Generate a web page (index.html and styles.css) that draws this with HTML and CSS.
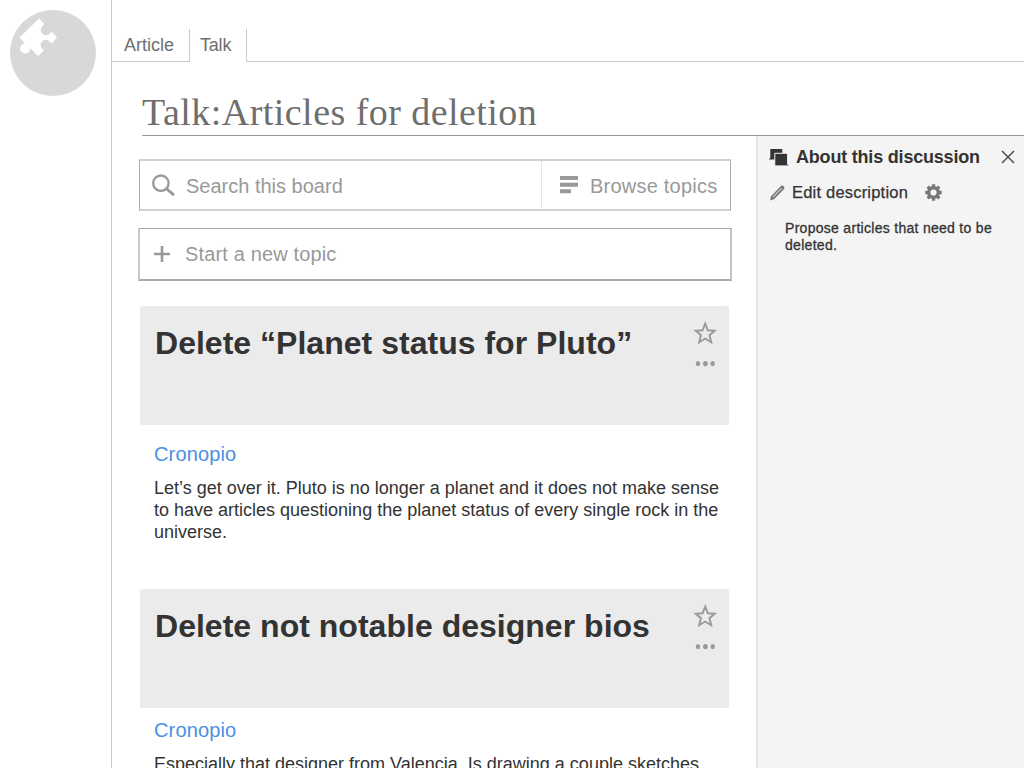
FILE: index.html
```html
<!DOCTYPE html>
<html lang="en">
<head>
<meta charset="utf-8">
<title>Talk:Articles for deletion</title>
<link rel="stylesheet" href="styles.css">
</head>
<body>
<div class="app">
  <div class="rail">
    <svg class="logo" width="86" height="86" viewBox="10 10 86 86">
      <circle cx="53" cy="53" r="43" fill="#d8d8d8"/>
      <path fill="#fff" d="M38.9 18.5L44.3 24L42.2 26.4A5.2 5.2 0 0 0 49.9 33.6L51.7 31.8L57.1 37.4L51.5 43.4L49.6 41.5A5.1 5.1 0 0 0 42 48.6L43.8 50.5L38.2 56.1L30.3 48.3A5.1 5.1 0 1 1 24.8 43.3L19.5 37.6Z"/>
    </svg>
  </div>
  <div class="page">
    <nav class="tabs">
      <a class="tab tab-article">Article</a>
      <a class="tab tab-talk">Talk</a>
      <span class="tab-fill"></span>
    </nav>
    <h1 class="title">Talk:Articles for deletion</h1>
    <div class="columns">
      <main class="board">
        <div class="search">
          <div class="search-field">
            <svg class="search-icon" width="24" height="24" viewBox="0 0 24 24" fill="none" stroke="#999"><circle cx="8.9" cy="9.2" r="7.7" stroke-width="2.3"/><path d="M14.2 14.5L22 21.2" stroke-width="2.9"/></svg>
            <span>Search this board</span>
          </div>
          <div class="browse">
            <svg class="list-icon" width="18" height="18" viewBox="0 0 18 18" fill="#999"><path d="M0 .1h18v4H0zM0 6.8h18v4H0zM0 13.3h11v4H0z"/></svg>
            <span>Browse topics</span>
          </div>
        </div>
        <div class="new-topic">
          <svg class="plus-icon" width="16" height="16" viewBox="0 0 16 16" stroke="#999" stroke-width="2.6"><path d="M8 0v16M0 8h16"/></svg>
          <span>Start a new topic</span>
        </div>
        <article class="topic">
          <header class="topic-head">
            <h2>Delete “Planet status for Pluto”</h2>
            <div class="actions">
              <svg width="24" height="23" viewBox="0 0 24 23" fill="none" stroke="#999" stroke-width="1.9"><path d="M12.2 2.6L14.8 9.3L21.6 9.8L16.5 14.2L18.2 21.2L12.2 17.5L6.2 21.2L7.9 14.2L2.8 9.8L9.6 9.3Z"/></svg>
              <svg width="20" height="6" viewBox="0 0 20 6" fill="#999"><ellipse cx="3" cy="2.6" rx="2.2" ry="2.6"/><ellipse cx="10.4" cy="2.6" rx="2.4" ry="2.6"/><ellipse cx="17.7" cy="2.6" rx="2.2" ry="2.6"/></svg>
            </div>
          </header>
          <div class="post">
            <a class="author">Cronopio</a>
            <p>Let’s get over it. Pluto is no longer a planet and it does not make sense<br>to have articles questioning the planet status of every single rock in the<br>universe.</p>
          </div>
        </article>
        <article class="topic second">
          <header class="topic-head">
            <h2>Delete not notable designer bios</h2>
            <div class="actions">
              <svg width="24" height="23" viewBox="0 0 24 23" fill="none" stroke="#999" stroke-width="1.9"><path d="M12.2 2.6L14.8 9.3L21.6 9.8L16.5 14.2L18.2 21.2L12.2 17.5L6.2 21.2L7.9 14.2L2.8 9.8L9.6 9.3Z"/></svg>
              <svg width="20" height="6" viewBox="0 0 20 6" fill="#999"><ellipse cx="3" cy="2.6" rx="2.2" ry="2.6"/><ellipse cx="10.4" cy="2.6" rx="2.4" ry="2.6"/><ellipse cx="17.7" cy="2.6" rx="2.2" ry="2.6"/></svg>
            </div>
          </header>
          <div class="post">
            <a class="author">Cronopio</a>
            <p>Especially that designer from Valencia. Is drawing a couple sketches</p>
          </div>
        </article>
      </main>
      <aside class="about">
        <div class="about-head">
          <svg width="20" height="17" viewBox="0 0 20 17"><path fill="#333" d="M1.3 0H13.3V10.6H0V10L1.3 9Z"/><path fill="#333" stroke="#f4f4f4" stroke-width="1" d="M5.8 4.3H18.6V15.2L20.6 16.9H5.8Z"/></svg>
          <h3>About this discussion</h3>
          <svg class="close" width="14" height="14" viewBox="0 0 14 14" stroke="#444" stroke-width="1.4"><path d="M1 1L13 13M13 1L1 13"/></svg>
        </div>
        <div class="edit">
          <svg width="16" height="16" viewBox="0 0 16 16"><path fill="#777" d="M1.2 15.4L1.8 11.4L11.4 1.5Q13-.2 14.7 1.3Q16.2 2.9 14.6 4.6L5 14.3Z"/><path fill="none" stroke="#ccc" stroke-width="1.1" d="M4 12L12.8 3.1"/></svg>
          <span>Edit description</span>
          <svg width="17" height="17" viewBox="-8.5 -8.5 17 17"><circle r="4.8" fill="none" stroke="#777" stroke-width="3.4"/><path stroke="#777" stroke-width="3.3" d="M0-8.2V-5M0 8.2V5M-8.2 0H-5M8.2 0H5M-5.8-5.8L-4-4M5.8 5.8L4 4M5.8-5.8L4-4M-5.8 5.8L-4 4"/></svg>
        </div>
        <p class="description">Propose articles that need to be<br>deleted.</p>
      </aside>
    </div>
  </div>
</div>
</body>
</html>
```

FILE: styles.css
```css
* { box-sizing: border-box; }
body {
  margin: 0;
  background: #fff;
  color: #333;
  font-family: "Liberation Sans", Arial, sans-serif;
  overflow: hidden;
}
h1, h2, h3, p { margin: 0; }
svg { display: block; flex: none; }
.app { display: flex; width: 1024px; height: 768px; overflow: hidden; }
.rail { flex: none; width: 112px; padding: 10px; border-right: 1px solid #c9c9c9; }
.page { flex: 1; min-width: 0; }
.tabs { display: flex; height: 62px; padding-top: 29px; color: #6e6e6e; font-size: 18px; line-height: 32px; }
.tab { flex: none; height: 33px; border-right: 1px solid #c9c9c9; }
.tab-article { width: 78px; padding-left: 12px; border-bottom: 1px solid #c9c9c9; }
.tab-talk { width: 57px; padding-left: 10px; letter-spacing: -0.2px; }
.tab-fill { flex: 1; border-bottom: 1px solid #c9c9c9; }
.title {
  height: 74px;
  margin-left: 30px;
  padding-top: 28px;
  border-bottom: 1px solid #999;
  color: #6e6e6e;
  font: 400 38px/44px "Liberation Serif", serif;
  letter-spacing: 0.45px;
  white-space: nowrap;
}
.columns { display: flex; height: 632px; }
.board { flex: none; width: 644px; padding: 23px 24px 0 26px; }
.search, .new-topic { color: #999; font-size: 20px; letter-spacing: 0.15px; white-space: nowrap; }
.search {
  display: flex;
  width: 592px;
  height: 52px;
  margin-left: 1px;
  border: solid #aaa;
  border-width: 2px 1px;
  border-top-color: #d1d1d1;
  border-bottom-color: #d1d1d1;
}
.search-field { display: flex; align-items: center; gap: 10px; flex: 1; padding: 1px 0 0 12px; letter-spacing: 0; }
.search-field span { padding-top: 1px; }
.browse { display: flex; align-items: center; gap: 12px; width: 189px; padding-left: 18px; border-left: 1px solid #e4e4e4; letter-spacing: 0.22px; }
.browse span { padding-top: 2px; }
.new-topic {
  display: flex;
  align-items: center;
  gap: 15px;
  width: 594px;
  height: 53px;
  margin-top: 17px;
  padding-left: 14px;
  border: solid;
  border-width: 1px 2px 2px;
  border-color: #aaa #c4c4c4 #aaa #c8c8c8;
}
.topic { margin: 25px 0 0 2px; width: 589px; }
.topic-head { display: flex; justify-content: space-between; height: 119px; padding: 15px 12px 0 15px; border-radius: 2px; background: #ebebeb; }
.topic-head h2 { font-size: 32px; line-height: 44px; letter-spacing: 0.02px; white-space: nowrap; }
.actions { display: flex; flex-direction: column; align-items: center; gap: 17px; }
.post { padding: 17px 0 0 14px; }
.author { display: block; color: #4a90e2; font-size: 20px; line-height: 24px; letter-spacing: 0.15px; }
.post p { margin-top: 11px; font-size: 18px; line-height: 22px; white-space: nowrap; }
.second { margin-top: 46px; }
.second .post { padding-top: 10px; }
.about { flex: 1; border-left: 2px solid #e2e2e2; background: #f4f4f4; }
.about-head { display: flex; align-items: center; height: 42px; padding: 0 9px 0 11px; }
.about-head h3 { flex: 1; margin-left: 7px; font-size: 18px; letter-spacing: -0.2px; white-space: nowrap; }
.edit { display: flex; align-items: center; height: 29px; padding-left: 11px; font-size: 16.5px; letter-spacing: 0.2px; -webkit-text-stroke: 0.25px #333; white-space: nowrap; }
.edit span { width: 133px; margin-left: 7px; }
.description { padding: 13px 0 0 27px; font-size: 14px; line-height: 17px; letter-spacing: 0.29px; -webkit-text-stroke: 0.3px #333; white-space: nowrap; }
```
